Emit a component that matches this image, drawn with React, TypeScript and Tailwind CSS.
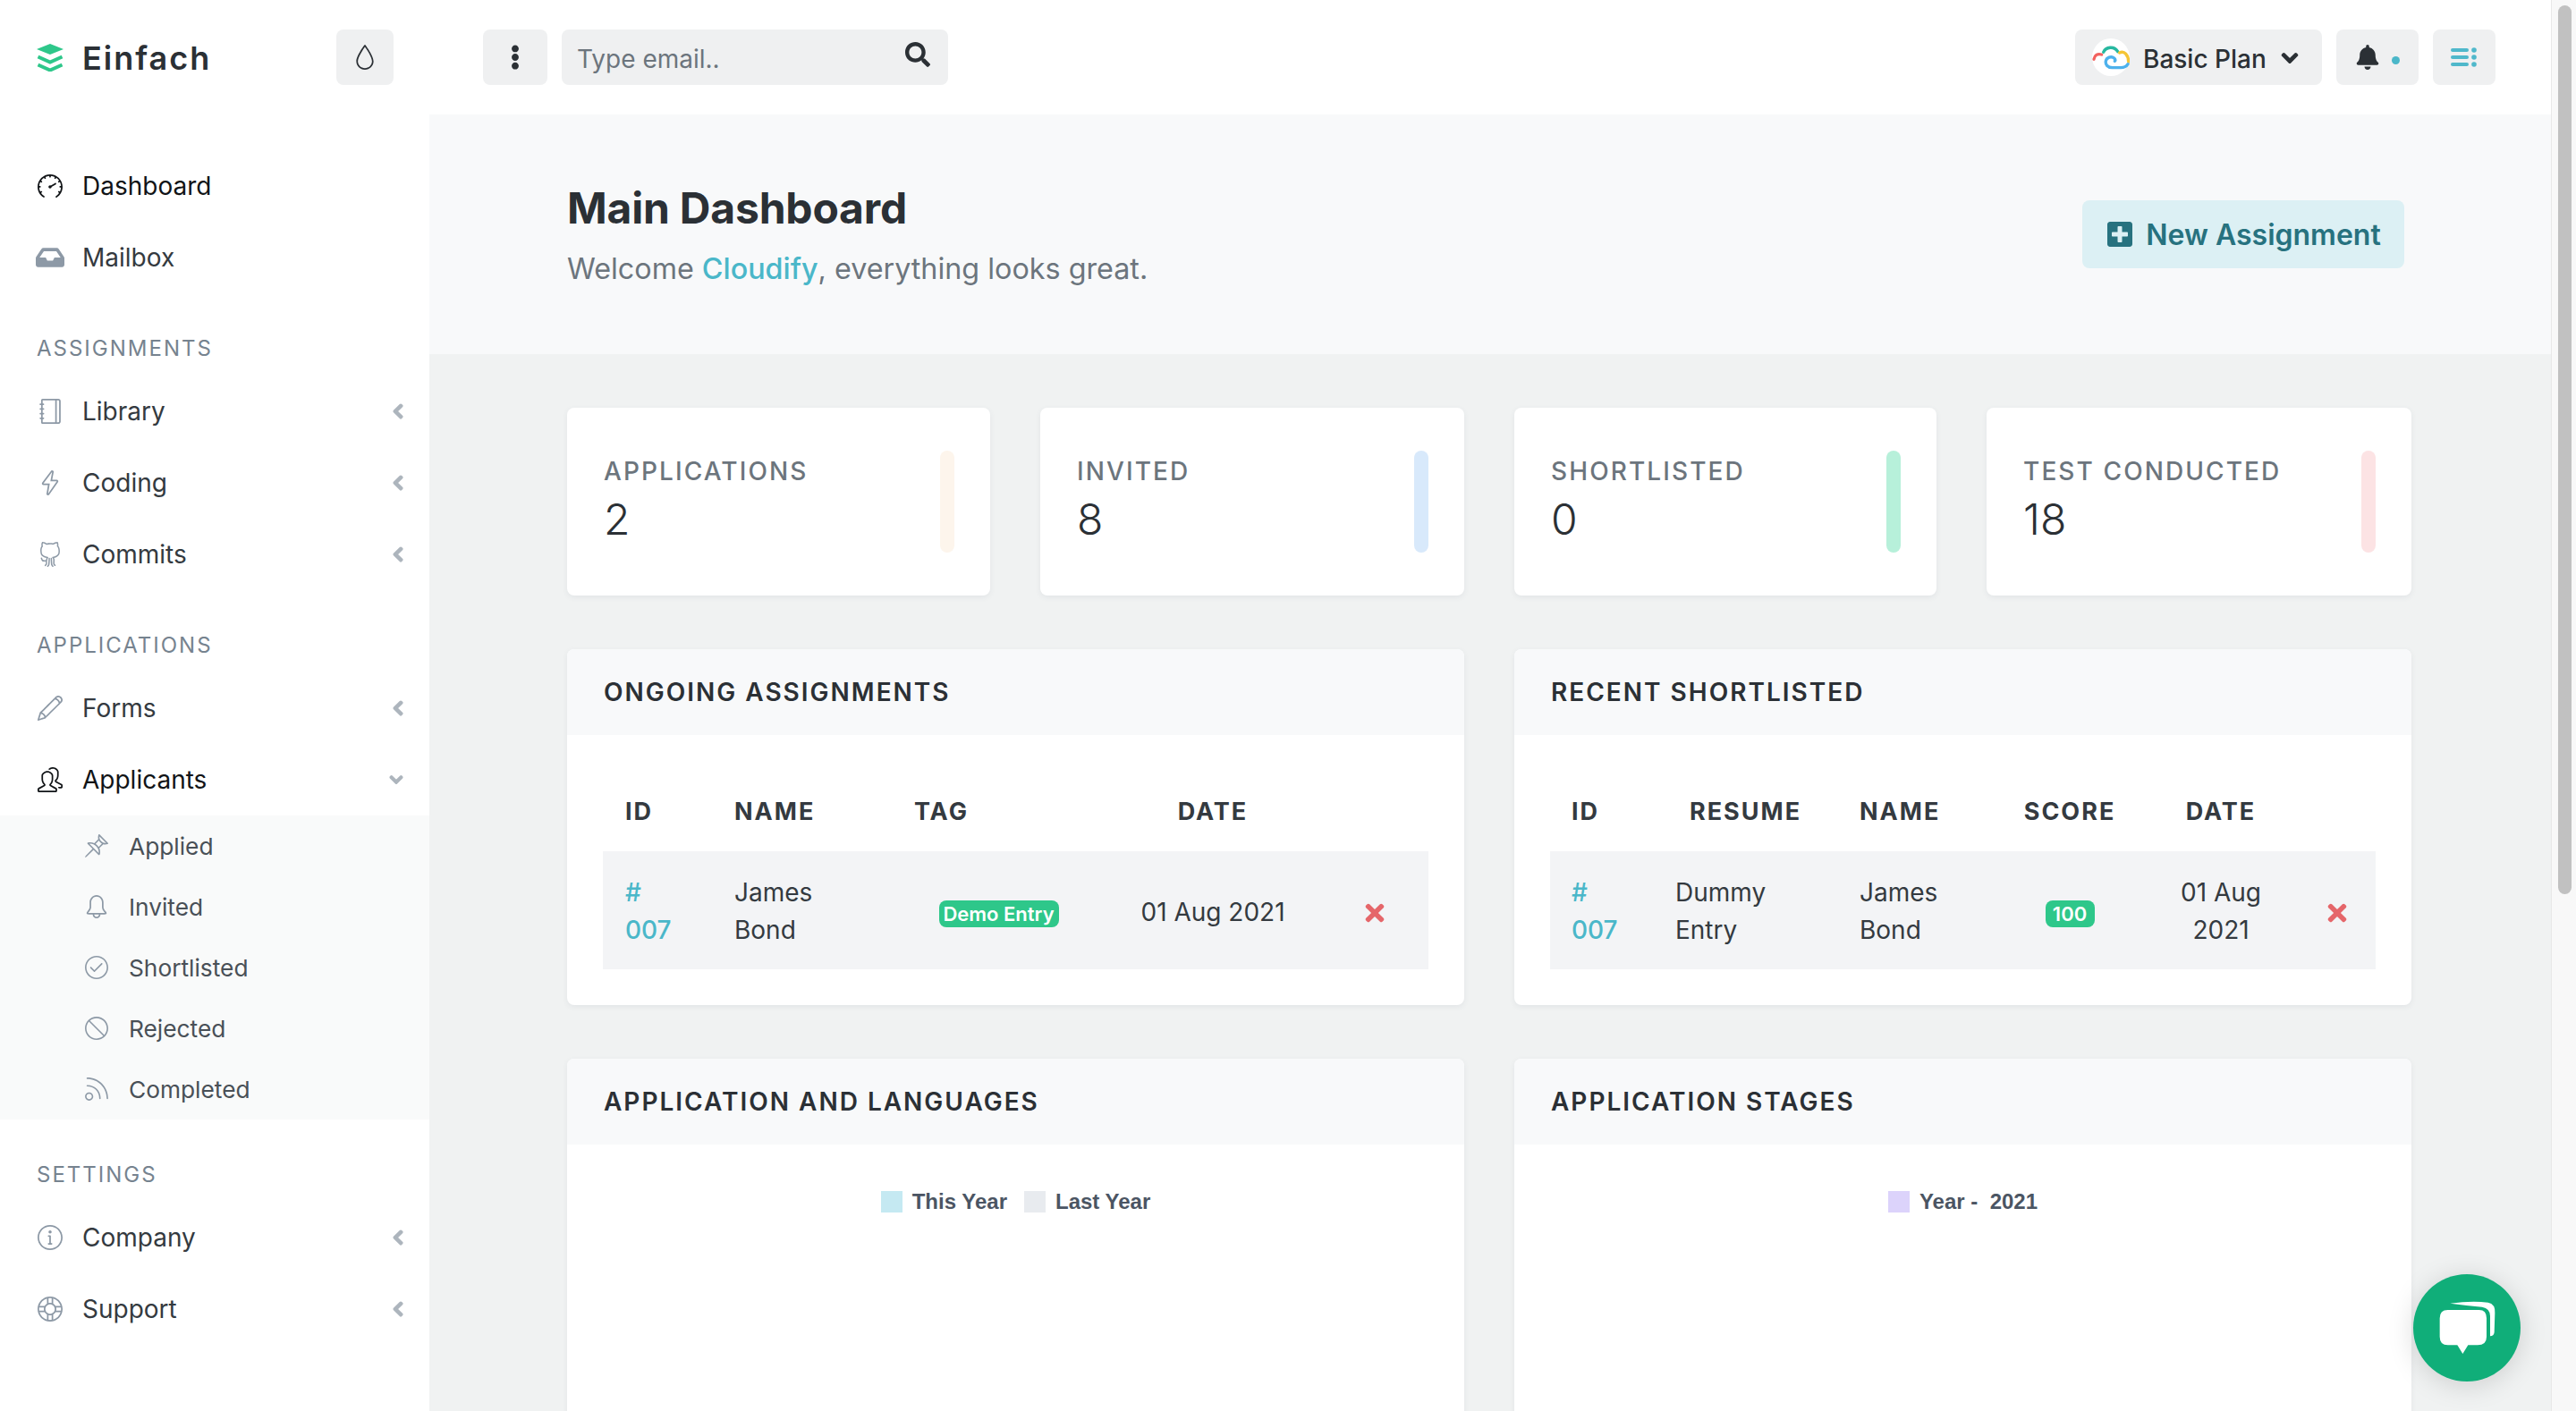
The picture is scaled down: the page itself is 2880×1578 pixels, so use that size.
import React from "react";
import { FaBell, FaChevronDown, FaChevronLeft, FaEllipsisV, FaInbox, FaPlusSquare, FaSearch, FaTimes } from "react-icons/fa";
import { SlBan, SlBell, SlCheck, SlDrop, SlEnergy, SlFeed, SlInfo, SlNotebook, SlPencil, SlPeople, SlPin, SlSocialGithub, SlSpeedometer, SlSupport } from "react-icons/sl";

const LogoMark = () => (
    <svg width="30" height="32" viewBox="0 0 30 32" className="text-[#2ec78a] shrink-0">
        <path d="M0 7 15 1l15 6-15 6z" fill="currentColor" />
        <path d="M1.5 15.5 15 21.5l13.5-6M1.5 24.5 15 30.5l13.5-6" fill="none" stroke="currentColor" strokeWidth="4" />
    </svg>
);

const CloudLogo = () => (
    <div className="w-[42px] h-[42px] rounded-full bg-white shrink-0">
        <svg width="42" height="42" viewBox="24 22 126 126" fill="none" strokeWidth="10" strokeLinecap="round">
            <path d="M30 92C32 78 42 72 56 76" stroke="#f2625f" />
            <path d="M62 68C70 50 98 46 110 66" stroke="#27b8a0" />
            <path d="M116 70C132 62 146 78 146 100" stroke="#f5c535" />
            <path d="M144 108C138 118 128 120 120 120H92C76 120 68 110 70 98 72 86 88 80 98 88 102 92 102 96 100 98" stroke="#4db1ec" />
        </svg>
    </div>
);

const MenuDots = () => (
    <svg width="30" height="24" viewBox="0 0 30 24" className="text-[#4fb8cb]">
        <g fill="currentColor">
            <rect x="0" y="2" width="20" height="4" rx="2" />
            <rect x="0" y="10" width="20" height="4" rx="2" />
            <rect x="0" y="18" width="20" height="4" rx="2" />
            <circle cx="26" cy="4" r="2.8" />
            <circle cx="26" cy="12" r="2.8" />
            <circle cx="26" cy="20" r="2.8" />
        </g>
    </svg>
);

const ChatBubble = () => (
    <svg width="120" height="120" viewBox="24 30 360 360" fill="#fff">
        <path d="M140 150H245Q270 150 270 178V240Q270 268 240 268H208L190 297 172 268H140Q113 268 113 240V178Q113 150 140 150Z" />
        <path d="M148 128Q220 118 275 125 300 130 298 160L296 225Q294 238 282 238V170Q282 145 255 140 200 135 148 128Z" />
    </svg>
);

const NavRow = ({ icon, label, active, open, plain }: { icon: React.ReactNode; label: string; active?: boolean; open?: boolean; plain?: boolean }) => (
    <div className={`h-[80px] flex items-center pl-[40px] pr-[26px] text-[28px] ${active ? "text-[#111417]" : "text-[#343a40]"}`}>
        <span className={`w-[32px] flex justify-center text-[28px] shrink-0 ${active ? "text-[#111417]" : "text-[#8d99a6]"}`}>{icon}</span>
        <span className="ml-[20px] flex-1">{label}</span>
        {!plain && (open
            ? <FaChevronDown className="text-[#adb5bd] text-[16px] mr-[3px] [stroke-width:50]" />
            : <FaChevronLeft className="text-[#adb5bd] text-[18px] [stroke-width:50]" />)}
    </div>
);

const SectionLabel = ({ children }: { children: React.ReactNode }) => (
    <div className="mt-[48px] mb-[16px] pl-[41px] h-[28px] leading-[28px] text-[24px] tracking-[2px] text-[#76838f]">{children}</div>
);

const subItems = [
    { icon: <SlPin />, label: "Applied" },
    { icon: <SlBell />, label: "Invited" },
    { icon: <SlCheck />, label: "Shortlisted" },
    { icon: <SlBan />, label: "Rejected" },
    { icon: <SlFeed />, label: "Completed" },
];

const Sidebar = () => (
    <aside className="w-[480px] shrink-0 bg-white pt-[40px]">
        <NavRow icon={<SlSpeedometer />} label="Dashboard" active plain />
        <NavRow icon={<FaInbox className="text-[32px]" />} label="Mailbox" plain />
        <SectionLabel>ASSIGNMENTS</SectionLabel>
        <NavRow icon={<SlNotebook />} label="Library" />
        <NavRow icon={<SlEnergy />} label="Coding" />
        <NavRow icon={<SlSocialGithub />} label="Commits" />
        <SectionLabel>APPLICATIONS</SectionLabel>
        <NavRow icon={<SlPencil />} label="Forms" />
        <NavRow icon={<SlPeople />} label="Applicants" active open />
        <div className="bg-[#f9fafa]">
            {subItems.map((item) => (
                <div key={item.label} className="h-[68px] flex items-center pl-[94px] text-[26.3px] text-[#495057]">
                    <span className="w-[28px] flex justify-center text-[26px] text-[#8d99a6] shrink-0">{item.icon}</span>
                    <span className="ml-[22px] mt-[2px]">{item.label}</span>
                </div>
            ))}
        </div>
        <SectionLabel>SETTINGS</SectionLabel>
        <NavRow icon={<SlInfo />} label="Company" />
        <NavRow icon={<SlSupport />} label="Support" />
    </aside>
);

const Topbar = () => (
    <header className="h-[128px] shrink-0 bg-white flex items-center pr-[62px]">
        <div className="w-[480px] shrink-0 flex items-center pl-[41px] pr-[40px]">
            <LogoMark />
            <span className="ml-[21px] mt-[1px] flex-1 text-[36px] font-semibold tracking-[2px] text-[#2b3035]">Einfach</span>
            <button className="w-[64px] h-[62px] rounded-[8px] bg-[#eff0f1] flex items-center justify-center text-[28px] text-[#2b3035]">
                <SlDrop />
            </button>
        </div>
        <button className="ml-[60px] w-[72px] h-[62px] rounded-[8px] bg-[#eff0f1] flex items-center justify-center text-[28px] text-[#2b3035]">
            <FaEllipsisV />
        </button>
        <div className="ml-[16px] w-[432px] h-[62px] rounded-[8px] bg-[#eff0f1] flex items-center pl-[17px] pr-[20px]">
            <span className="flex-1 mt-[3px] text-[28px] text-[#6c757d]">Type email..</span>
            <FaSearch className="text-[28px] text-[#2b3035] -mt-[6px]" />
        </div>
        <div className="ml-auto flex items-center">
            <button className="w-[276px] h-[62px] rounded-[8px] bg-[#eff0f1] flex items-center pl-[19px] text-[28px] font-medium text-[#2b3035]">
                <CloudLogo />
                <span className="ml-[15px] mt-[3px]">Basic Plan</span>
                <FaChevronDown className="ml-[16px] mt-[2px] text-[20px] [stroke-width:40]" />
            </button>
            <button className="ml-[16px] w-[92px] h-[62px] rounded-[8px] bg-[#eff0f1] flex items-center pl-[21px] text-[28px] text-[#2b3035]">
                <FaBell />
                <span className="ml-[13px] mt-[6px] w-[9px] h-[9px] rounded-full bg-[#4ab7c9]" />
            </button>
            <button className="ml-[16px] w-[70px] h-[62px] rounded-[8px] bg-[#eff0f1] flex items-center justify-center">
                <MenuDots />
            </button>
        </div>
    </header>
);

const stats = [
    { label: "APPLICATIONS", value: "2", bar: "bg-[#fdf5ec]" },
    { label: "INVITED", value: "8", bar: "bg-[#d8e9fb]" },
    { label: "SHORTLISTED", value: "0", bar: "bg-[#b7f0da]" },
    { label: "TEST CONDUCTED", value: "18", bar: "bg-[#fce3e4]" },
];

const StatCard = ({ label, value, bar }: { label: string; value: string; bar: string }) => (
    <div className="h-[210px] bg-white rounded-[8px] shadow-[0_2px_6px_rgba(60,80,100,0.08)] flex items-center justify-between pl-[41px] pr-[40px]">
        <div className="pb-[7px]">
            <div className="text-[28px] leading-[42px] font-medium tracking-[2.1px] text-[#6c757d]">{label}</div>
            <div className="text-[48px] leading-[58px] mt-[4px] font-light text-[#2b3035]">{value}</div>
        </div>
        <div className={`w-[16px] h-[114px] rounded-[8px] ${bar}`} />
    </div>
);

const Card = ({ title, children }: { title: string; children: React.ReactNode }) => (
    <section className="bg-white rounded-[8px] overflow-hidden shadow-[0_2px_6px_rgba(60,80,100,0.08)]">
        <h3 className="h-[96px] bg-[#f8f9fa] flex items-center pl-[41px] text-[28px] font-semibold tracking-[2px] text-[#2b3035]">{title}</h3>
        {children}
    </section>
);

const thClass = "h-[90px] pt-[2px] text-[27px] font-bold tracking-[2px] text-[#343a40]";
const tdClass = "h-[132px] pt-[2px] bg-[#f3f4f6] text-[28px] leading-[42px]";
const textClass = "text-[#343a40]";
const idClass = "text-[#4ab7c9] font-medium";
const badgeClass = "inline-block h-[30px] leading-[30px] rounded-[8px] bg-[#2ec78a] text-white text-[22px] font-semibold";

const OngoingTable = () => (
    <table className="w-full table-fixed border-collapse">
        <colgroup>
            <col className="w-[123px]" />
            <col className="w-[200px]" />
            <col className="w-[239px]" />
            <col className="w-[240px]" />
            <col />
        </colgroup>
        <thead>
            <tr>
                <th className={`${thClass} text-left pl-[25px]`}>ID</th>
                <th className={`${thClass} text-left pl-[24px]`}>NAME</th>
                <th className={`${thClass} text-left pl-[25px]`}>TAG</th>
                <th className={`${thClass} text-center`}>DATE</th>
                <th className={thClass} />
            </tr>
        </thead>
        <tbody>
            <tr>
                <td className={`${tdClass} pl-[25px] ${idClass}`}>#<br />007</td>
                <td className={`${tdClass} ${textClass} pl-[24px]`}>James<br />Bond</td>
                <td className={`${tdClass} text-center`}><span className={`${badgeClass} w-[134px] mt-[10px]`}>Demo Entry</span></td>
                <td className={`${tdClass} ${textClass} text-center pt-[4px]`}>01 Aug 2021</td>
                <td className={`${tdClass} text-center`}><FaTimes className="inline text-[#e5666a] text-[30px]" /></td>
            </tr>
        </tbody>
    </table>
);

const ShortlistedTable = () => (
    <table className="w-full table-fixed border-collapse">
        <colgroup>
            <col className="w-[116px]" />
            <col className="w-[205px]" />
            <col className="w-[178px]" />
            <col className="w-[164px]" />
            <col className="w-[174px]" />
            <col />
        </colgroup>
        <thead>
            <tr>
                <th className={`${thClass} text-left pl-[24px]`}>ID</th>
                <th className={`${thClass} text-center`}>RESUME</th>
                <th className={`${thClass} text-left pl-[25px]`}>NAME</th>
                <th className={`${thClass} text-center`}>SCORE</th>
                <th className={`${thClass} text-center`}>DATE</th>
                <th className={thClass} />
            </tr>
        </thead>
        <tbody>
            <tr>
                <td className={`${tdClass} pl-[24px] ${idClass}`}>#<br />007</td>
                <td className={`${tdClass} ${textClass} pl-[24px]`}>Dummy<br />Entry</td>
                <td className={`${tdClass} ${textClass} pl-[25px]`}>James<br />Bond</td>
                <td className={`${tdClass} text-center`}><span className={`${badgeClass} w-[55px] mt-[10px]`}>100</span></td>
                <td className={`${tdClass} ${textClass} text-center`}>01 Aug<br />2021</td>
                <td className={`${tdClass} text-center`}><FaTimes className="inline text-[#e5666a] text-[30px]" /></td>
            </tr>
        </tbody>
    </table>
);

const LegendItem = ({ color, label }: { color: string; label: string }) => (
    <div className="flex items-center">
        <span className={`w-[24px] h-[24px] ${color}`} />
        <span className="ml-[11px] whitespace-pre">{label}</span>
    </div>
);

const Legend = ({ children }: { children: React.ReactNode }) => (
    <div className="h-[400px] pt-[52px] flex items-start justify-center gap-[19px] font-[family-name:'Liberation_Sans',sans-serif] font-bold text-[24px] leading-[24px] text-[#4b5563]">
        {children}
    </div>
);

export default function App() {
    return (
        <div className="relative h-[1578px] overflow-hidden flex bg-white font-[family-name:Inter,sans-serif]">
            <div className="flex-1 min-w-0 flex flex-col">
                <Topbar />
                <div className="flex flex-1 min-h-0">
                    <Sidebar />
                    <main className="flex-1 min-w-0 bg-[#f0f2f2]">
                        <div className="h-[268px] bg-[#f8f9fa] flex items-center justify-between pl-[154px] pr-[164px]">
                            <div>
                                <h1 className="text-[48px] leading-[60px] mt-[1px] font-bold tracking-[-0.2px] text-[#2b3035]">Main Dashboard</h1>
                                <p className="mt-[17px] text-[32.3px] leading-[42px] text-[#6c757d]">
                                    Welcome <span className="text-[#4ab7c9] font-medium">Cloudify</span>, everything looks great.
                                </p>
                            </div>
                            <button className="w-[360px] h-[76px] rounded-[8px] bg-[#dcf0f4] flex items-center justify-center text-[32px] font-semibold text-[#27727f]">
                                <FaPlusSquare className="text-[32px]" />
                                <span className="ml-[13px] mt-[2px]">New Assignment</span>
                            </button>
                        </div>
                        <div className="pt-[60px] pl-[154px] pr-[156px] flex flex-col gap-[60px]">
                            <div className="grid grid-cols-[473px_474px_472px_475px] gap-[56px]">
                                {stats.map((s) => <StatCard key={s.label} {...s} />)}
                            </div>
                            <div className="grid grid-cols-[1003px_1003px] gap-[56px]">
                                <Card title="ONGOING ASSIGNMENTS">
                                    <div className="p-[40px]"><OngoingTable /></div>
                                </Card>
                                <Card title="RECENT SHORTLISTED">
                                    <div className="p-[40px]"><ShortlistedTable /></div>
                                </Card>
                            </div>
                            <div className="grid grid-cols-[1003px_1003px] gap-[56px]">
                                <Card title="APPLICATION AND LANGUAGES">
                                    <Legend>
                                        <LegendItem color="bg-[#c5e9f2]" label="This Year" />
                                        <LegendItem color="bg-[#e8ebef]" label="Last Year" />
                                    </Legend>
                                </Card>
                                <Card title="APPLICATION STAGES">
                                    <Legend>
                                        <LegendItem color="bg-[#dcd3fb]" label="Year -  2021" />
                                    </Legend>
                                </Card>
                            </div>
                        </div>
                    </main>
                </div>
            </div>
            <div className="w-[28px] shrink-0 bg-[#f8f8f8] border-l border-[#e8e8e8] pl-[7px] pt-[6px]">
                <div className="w-[15px] h-[994px] rounded-full bg-[#c1c1c1]" />
            </div>
            <div className="absolute right-[62px] bottom-[33px] w-[120px] h-[120px] rounded-full bg-[#10ae79] shadow-[0_4px_30px_rgba(0,0,0,0.15)]">
                <ChatBubble />
            </div>
        </div>
    );
}
